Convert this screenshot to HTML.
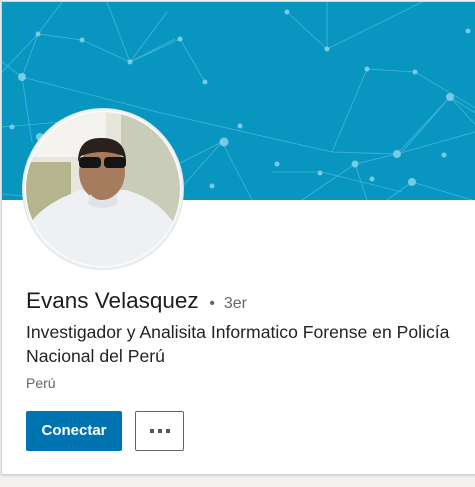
<!DOCTYPE html>
<html><head><meta charset="utf-8"><style>
*{margin:0;padding:0;box-sizing:border-box}
body{width:475px;height:487px;background:#f3f2ef;font-family:"Liberation Sans","DejaVu Sans",sans-serif;position:relative;overflow:hidden}
.card{position:absolute;left:1px;top:1px;width:480px;height:474px;background:#fff;border:1px solid #d6d6d6;box-shadow:0 1px 2px rgba(0,0,0,.15);overflow:hidden}
.banner{position:absolute;left:0;top:0;width:480px;height:198px;background:#0896c1}
.av{position:absolute;left:20px;top:106px;width:162px;height:162px;border-radius:50%;background:#fff;border:1px solid #dde3e6;box-shadow:0 0 0 2px #eef2f4 inset}
.av svg{position:absolute;left:3px;top:3px}
.name{position:absolute;left:24px;top:286px;font-size:22.5px;color:#1d1d1d}
.deg{font-size:16px;color:#666}
.hl{position:absolute;left:24px;top:318px;font-size:17.6px;line-height:24px;color:#222;width:445px}
.loc{position:absolute;left:24px;top:373px;font-size:14px;color:#666}
.btn{position:absolute;left:24px;top:409px;width:96px;height:40px;background:#0073b1;border-radius:2px;color:#fff;font-weight:bold;font-size:15px;text-align:center;line-height:40px}
.more{position:absolute;left:133px;top:409px;width:49px;height:40px;border:1px solid #666;border-radius:2px}
.more i{position:absolute;top:17px;width:4px;height:4px;background:#555}
</style></head><body>
<div class="card">
<div class="banner">
<svg width="480" height="199" viewBox="0 0 480 199">
<g stroke="#5cc3e0" stroke-width="0.8" opacity="0.7" fill="none">
<path d="M0 60 L20 75 L36 32 L80 38 L128 60 L178 37 L203 80 M20 75 L155 110 L330 150 L395 152 L448 95 L480 130 M20 75 L30 140 M36 32 L0 70 M128 60 L165 10 M36 32 L60 0 M128 60 L105 0 M128 60 L173 37 M220 140 L250 198 M220 140 L180 185 M220 140 L140 180 M353 162 L365 198 M353 162 L395 152 L480 128 M353 162 L300 198 M448 95 L400 150 M448 95 L480 115 M365 67 L330 150 M365 67 L413 70 L480 110 M325 47 L420 0 M325 47 L285 10 M325 47 L325 0 M410 180 L470 198 M410 180 L385 198 M0 125 L60 120 M0 192 L30 195 M270 170 L320 170 L400 190"/>
</g>
<g fill="#8fd6ec" opacity="0.8">
<circle cx="20" cy="75" r="4"/><circle cx="36" cy="32" r="2.5"/><circle cx="80" cy="38" r="2.5"/><circle cx="128" cy="60" r="2.5"/><circle cx="178" cy="37" r="2.5"/><circle cx="203" cy="80" r="2.5"/>
<circle cx="222" cy="140" r="4.5"/><circle cx="238" cy="124" r="2.5"/><circle cx="353" cy="162" r="3.5"/><circle cx="395" cy="152" r="4"/><circle cx="448" cy="95" r="4"/><circle cx="365" cy="67" r="2.5"/><circle cx="413" cy="70" r="2.5"/><circle cx="325" cy="47" r="2.5"/><circle cx="285" cy="10" r="2.5"/><circle cx="466" cy="29" r="2.5"/><circle cx="410" cy="180" r="4"/><circle cx="370" cy="177" r="2.5"/><circle cx="275" cy="162" r="2.5"/><circle cx="318" cy="171" r="2.5"/><circle cx="210" cy="184" r="2.5"/><circle cx="38" cy="135" r="4"/><circle cx="10" cy="125" r="2.5"/><circle cx="442" cy="153" r="2.5"/>
</g>
</svg>
</div>
<div class="av">
<svg width="154" height="154" viewBox="0 0 154 154">
<defs><clipPath id="c"><circle cx="77" cy="77" r="77"/></clipPath></defs>
<g clip-path="url(#c)">
<rect width="154" height="154" fill="#e7e6dc"/>
<rect x="95" y="0" width="60" height="110" fill="#c9ccb8"/>
<rect x="0" y="50" width="45" height="60" fill="#b5b58d"/>
<rect x="0" y="0" width="80" height="45" fill="#f4f3ef"/>
<path d="M0 154 L5 110 Q20 90 55 78 L100 78 Q135 88 150 115 L154 154Z" fill="#eef0f4"/>
<path d="M10 118 L0 112 L0 135Z" fill="#222"/>
<ellipse cx="76" cy="60" rx="23" ry="28" fill="#a67c5f"/>
<path d="M52 50 Q52 25 76 26 Q100 26 100 50 L97 44 Q76 36 55 44Z" fill="#2a211c"/>
<rect x="53" y="45" width="22" height="11" rx="4" fill="#141414"/>
<rect x="78" y="45" width="22" height="11" rx="4" fill="#141414"/>
<path d="M64 82 Q76 95 90 82 L92 92 Q76 100 62 92Z" fill="#e0e2e8"/>
</g>
</svg>
</div>
<div class="name">Evans Velasquez <span class="deg">&nbsp;•&nbsp; 3er</span></div>
<div class="hl">Investigador y Analisita Informatico Forense en Policía Nacional del Perú</div>
<div class="loc">Perú</div>
<div class="btn">Conectar</div>
<div class="more"><i style="left:14px"></i><i style="left:22px"></i><i style="left:30px"></i></div>
</div>
</body></html>
